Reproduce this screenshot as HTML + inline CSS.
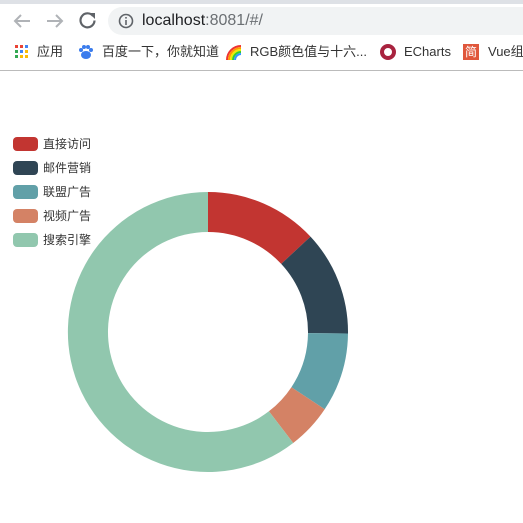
<!DOCTYPE html>
<html><head><meta charset="utf-8"><style>
*{margin:0;padding:0;box-sizing:border-box}
body{width:523px;height:523px;overflow:hidden;background:#fff;font-family:"Liberation Sans","Noto Sans CJK SC",sans-serif;position:relative}
.abs{position:absolute}
.bm{position:absolute;top:44px;height:16px;line-height:16px;font-size:13px;color:#333;white-space:nowrap}
.lg{position:absolute;left:13px;width:25px;height:14px;border-radius:4px}
.lt{position:absolute;left:43px;font-size:12px;line-height:14px;color:#333}
</style></head><body>
<div class="abs" style="left:0;top:0;width:523px;height:4px;background:#dee1e6"></div>
<svg class="abs" style="left:0;top:4px" width="110" height="34">
<g stroke="#b0b3b7" stroke-width="2" fill="none"><path d="M30 17H15M21 11l-6 6 6 6"/><path d="M47 17h15M56 11l6 6-6 6"/></g>
<path d="M93 12a7 7 0 1 0 1.5 4.5" stroke="#5f6368" stroke-width="2.2" fill="none"/><path d="M89 9h6v6z" fill="#5f6368"/>
</svg>
<div class="abs" style="left:108px;top:7px;width:430px;height:28px;border-radius:14px;background:#f1f3f4"></div>
<svg class="abs" style="left:118px;top:13px" width="16" height="16"><circle cx="8" cy="8" r="6.5" stroke="#5f6368" stroke-width="1.6" fill="none"/><rect x="7.2" y="7" width="1.6" height="5" fill="#5f6368"/><rect x="7.2" y="4" width="1.6" height="1.6" fill="#5f6368"/></svg>
<div class="abs" style="left:142px;top:12px;font-size:16px;line-height:18px;color:#202124">localhost<span style="color:#6b6f73">:8081/#/</span></div>
<svg class="abs" style="left:15px;top:45px" width="14" height="14"><g>
<rect x="0" y="0" width="3" height="3" fill="#ea4335"/><rect x="5" y="0" width="3" height="3" fill="#ea4335"/><rect x="10" y="0" width="3" height="3" fill="#4285f4"/>
<rect x="0" y="5" width="3" height="3" fill="#34a853"/><rect x="5" y="5" width="3" height="3" fill="#4285f4"/><rect x="10" y="5" width="3" height="3" fill="#fbbc05"/>
<rect x="0" y="10" width="3" height="3" fill="#34a853"/><rect x="5" y="10" width="3" height="3" fill="#fbbc05"/><rect x="10" y="10" width="3" height="3" fill="#fbbc05"/></g></svg>
<div class="bm" style="left:37px">应用</div>
<svg class="abs" style="left:78px;top:44px" width="16" height="16" fill="#3b7ced"><ellipse cx="8" cy="11" rx="5" ry="4"/><circle cx="3" cy="6" r="2"/><circle cx="6" cy="3" r="2"/><circle cx="10" cy="3" r="2"/><circle cx="13" cy="6" r="2"/></svg>
<div class="bm" style="left:102px">百度一下，你就知道</div>
<svg class="abs" style="left:225px;top:44px" width="18" height="16" fill="none" stroke-width="2"><path d="M2 16A14 14 0 0 1 16 2" stroke="#e33"/><path d="M4 16A12 12 0 0 1 16 4" stroke="#f90"/><path d="M6 16A10 10 0 0 1 16 6" stroke="#ee0"/><path d="M8 16A8 8 0 0 1 16 8" stroke="#3c3"/><path d="M10 16A6 6 0 0 1 16 10" stroke="#39f"/></svg>
<div class="bm" style="left:250px">RGB颜色值与十六...</div>
<svg class="abs" style="left:380px;top:44px" width="16" height="16"><circle cx="8" cy="8" r="6" stroke="#a8233f" stroke-width="4" fill="none"/></svg>
<div class="bm" style="left:404px">ECharts</div>
<div class="abs" style="left:463px;top:44px;width:16px;height:16px;background:#e0573c;color:#fff;font-size:12px;line-height:16px;text-align:center">简</div>
<div class="bm" style="left:488px">Vue组</div>
<div class="abs" style="left:0;top:70px;width:523px;height:1px;background:#bbb"></div>

<div class="lg" style="top:137px;background:#c23531"></div><div class="lt" style="top:137px">直接访问</div>
<div class="lg" style="top:161px;background:#2f4554"></div><div class="lt" style="top:161px">邮件营销</div>
<div class="lg" style="top:185px;background:#61a0a8"></div><div class="lt" style="top:185px">联盟广告</div>
<div class="lg" style="top:209px;background:#d48265"></div><div class="lt" style="top:209px">视频广告</div>
<div class="lg" style="top:233px;background:#91c7ae"></div><div class="lt" style="top:233px">搜索引擎</div>

<svg class="abs" style="left:0;top:0" width="523" height="523">
<path d="M208 192A140 140 0 0 1 310.5 236.6L281.2 263.9A100 100 0 0 0 208 232Z" fill="#c23531"/>
<path d="M310.5 236.6A140 140 0 0 1 348 333.5L308 333.1A100 100 0 0 0 281.2 263.9Z" fill="#2f4554"/>
<path d="M348 333.5A140 140 0 0 1 324.7 409.3L291.4 387.2A100 100 0 0 0 308 333.1Z" fill="#61a0a8"/>
<path d="M324.7 409.3A140 140 0 0 1 293.2 443L268.9 411.3A100 100 0 0 0 291.4 387.2Z" fill="#d48265"/>
<path d="M293.2 443A140 140 0 1 1 208 192L208 232A100 100 0 1 0 268.9 411.3Z" fill="#91c7ae"/>
</svg>
</body></html>
